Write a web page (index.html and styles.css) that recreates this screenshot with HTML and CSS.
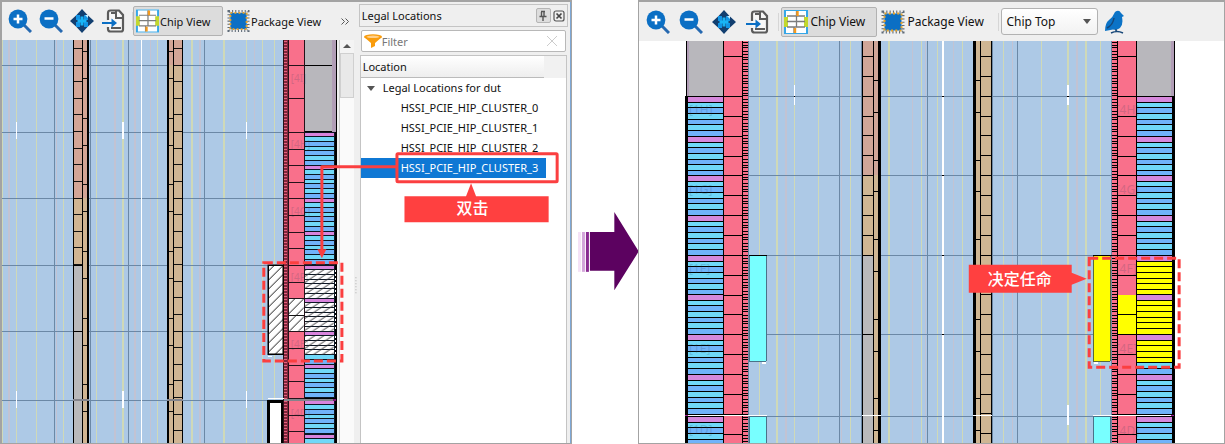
FILE: index.html
```html
<!DOCTYPE html>
<html lang="zh-CN">
<head>
<meta charset="utf-8">
<title>Legal Locations</title>
<link rel="stylesheet" href="styles.css">
</head>
<body>
<svg class="defs" aria-hidden="true">
  <defs>
    <symbol id="i-zoom-in" viewBox="0 0 24 24"><path d="M16 16l7 7" stroke="#2669b0" stroke-width="3"/><circle cx="10" cy="10" r="9.4" fill="#0b6fc4"/><path d="M10 5.5v9M5.5 10h9" stroke="#fff" stroke-width="2.5"/></symbol>
    <symbol id="i-zoom-out" viewBox="0 0 24 24"><path d="M16 16l7 7" stroke="#2669b0" stroke-width="3"/><circle cx="10" cy="10" r="9.4" fill="#0b6fc4"/><path d="M5.5 9.5h9" stroke="#fff" stroke-width="2.5"/></symbol>
    <symbol id="i-fit" viewBox="0 0 24 24"><path d="M6 6h5v5H6zM13 6h5v5h-5zM6 13h5v5H6zM13 13h5v5h-5z" fill="#1295e6"/><path d="M12 0l5.500 6h-3.500v5h4V6.500l6 5.500-6 5.500V13h-4v5h3.500L12 24l-5.500-6H10v-5H6v4.500L0 12l6-5.500V11h4V6H6.500z" fill="#123f70"/><path d="M10.500 7.500h3v9h-3zM7.500 10.500h9v3h-9z" fill="#19b4f5"/><path d="M15 6h3v3z" fill="#c9efff"/></symbol>
    <symbol id="i-goto" viewBox="0 0 24 24"><path d="M7 11V4q0-2.500 2.500-2.500H18L22 6v14.500q0 2-2 2H9.500q-2.500 0-2.500-2.500v-2" fill="#f7f7f7" stroke="#5b5b5b" stroke-width="2.200"/><path d="M15 2v7h7M10 4h5M10 19h10" fill="none" stroke="#5b5b5b" stroke-width="2"/><path d="M1 14h11" stroke="#0b6fc4" stroke-width="2"/><path d="M10.500 9.500l5.500 4.500-5.500 4.500z" fill="#0b6fc4"/></symbol>
    <symbol id="i-chip" viewBox="0 0 24 24"><path d="M0 0h24v24H0z" fill="#fff"/><path d="M1 0v24M23 0v24" stroke="#36a7e8" stroke-width="2"/><path d="M2 7v10M22 7v10" stroke="#c2d82e" stroke-width="4"/><path d="M2 .5h20M2 23.500h20" stroke="#36a7e8"/><path d="M3 6h18M3 11.500h18M3 17h18M12.500 6v11M12.500 1v5M10 17v6" stroke="#7c7c7c" stroke-width="1.300"/><path d="M13.500 1v5M11 18v5" stroke="#f59a1c" stroke-width="2.400"/></symbol>
    <symbol id="i-package" viewBox="0 0 24 24"><path d="M2 2h20v20H2z" fill="none" stroke="#5f6b78" stroke-width="3" stroke-dasharray="1.100 2.200"/><path d="M3.500 3.500h17v17h-17z" fill="#0b6fc4" stroke="#e9a327" stroke-width="2" stroke-dasharray="2 2.250"/></symbol>
    <symbol id="i-bird" viewBox="0 0 20 24"><path d="M11 2q4-3 6 1l3 3-2 1q1.500 8-2 11-3 2.500-7 1.500L1 21q0-8 4-11 4-3 6-8z" fill="#0b73c7"/><path d="M3 18Q9 15 10 8M7 23q6-3 12 0M12 19v3" stroke="#174778" stroke-width="1.500" fill="none"/></symbol>
    <symbol id="i-funnel" viewBox="0 0 18 15"><path d="M0 3l7 6v5l4-2V9l7-6z" fill="#f99c0c"/><ellipse cx="9" cy="2.800" rx="9" ry="2.600" fill="#f99c0c"/><ellipse cx="9" cy="2.800" rx="6.500" ry="1.300" fill="#ffd08b"/></symbol>

    <g id="mod-s"><path d="M0 0h30v34H0z" fill="#0b1622"/><path d="M0 1h29v3H0z" fill="#d884dc"/><path d="M0 5h29v4H0z" class="row-a"/><path d="M0 10h29v4H0z" class="row-b"/><path d="M0 15h29v3H0z" class="row-a"/><path d="M0 19h29v4H0z" class="row-b"/><path d="M0 24h29v4H0z" class="row-e"/><path d="M0 29h29v4H0z" class="row-f"/></g>
    <g id="mod-l"><path d="M0 0h35v41H0z" fill="#000"/><path d="M0 1h35v5H0z" fill="#d688dc"/><path d="M0 7h35v4H0z" class="row-a"/><path d="M0 12h35v5H0z" class="row-b"/><path d="M0 18h35v5H0z" class="row-a"/><path d="M0 24h35v4H0z" class="row-b"/><path d="M0 29h35v5H0z" class="row-e"/><path d="M0 35h35v5H0z" class="row-f"/></g>
    <pattern id="hatch" width="9" height="9" patternUnits="userSpaceOnUse"><path d="M-1 10L10-1M-1 1l2-2M8 10l2-2" stroke="#111" stroke-width="1"/></pattern>
    <pattern id="hatch-flat" width="9" height="6" patternUnits="userSpaceOnUse"><path d="M-1.500 7L10.500-1M-1.500 1L1.500-1M7.500 7l3-2" stroke="#333" stroke-width="1"/></pattern>
  </defs>
</svg>

<main class="page">
  <section class="window window-left" aria-label="Chip View">
    <div class="viewer">
      <div class="toolbar">
        <button class="tool" aria-label="Zoom in"><svg><use href="#i-zoom-in"/></svg></button>
        <button class="tool" aria-label="Zoom out"><svg><use href="#i-zoom-out"/></svg></button>
        <button class="tool" aria-label="Fit"><svg><use href="#i-fit"/></svg></button>
        <button class="tool" aria-label="Go to"><svg><use href="#i-goto"/></svg></button>
        <span class="sep"></span>
        <button class="view active"><svg><use href="#i-chip"/></svg>Chip View</button>
        <button class="view"><svg><use href="#i-package"/></svg>Package View</button>
        <button class="more" aria-label="More"><svg viewBox="0 0 8 7"><path d="M.5.5l3 3-3 3M4.500.5l3 3-3 3" fill="none" stroke="#555"/></svg></button>
      </div>
      <div class="stage">
        <svg class="canvas" viewBox="2 40 336 403" role="img" aria-label="Floorplan with legal location highlighted">
          <path d="M2 40h334v403H2z" fill="#adc9e6"/>
          <path class="ln-yellow" d="M2.500 40v403M16.500 40v403M36.500 40v403M64 40v403M96.500 40v403M157.500 40v403M246.500 40v403M262.500 40v403M274.500 40v403"/>
          <path class="ln-yellow wide" d="M123 40v403M192 40v403M224 40v403"/>
          <path class="ln-pink" d="M56.500 40v403M150.500 40v403M254.500 40v403"/>
          <path class="ln-pink wide" d="M9 40v403M115 40v403M135 40v403M200 40v403"/>
          <path class="ln-slate" d="M54.500 40v403M90.500 40v403M128.500 40v403M204.500 40v403M2 65.500h282M2 132.500h282M2 198.500h282M2 265.500h282M2 331.500h282M2 400.500h282"/>
          <path d="M141.500 40v403M16.500 122v17M246.500 122v17M16.500 391v17M246.500 391v17" stroke="#fff"/>
          <path d="M123 122v17M123 391v17" stroke="#fff" stroke-width="2"/>

          <path d="M73 40h16v403H73zM167 40h16v403h-16z" fill="#000"/>
          <path d="M74 40h8v158h-8zM83 40h4v158h-4zM169 40h4v25h-4zM174 40h8v25h-8z" fill="#d3a596"/>
          <path d="M74 198h8v67h-8zM83 198h4v245h-4zM169 65h4v378h-4zM174 65h8v378h-8z" fill="#d0b593"/>
          <path d="M74 266h8v65h-8zM74 332h8v111h-8z" fill="#b9b9bb"/>
          <path d="M78 48v218" stroke="#111" stroke-width="8" stroke-dasharray="1 15.640"/>
          <path d="M178 48v395" stroke="#111" stroke-width="8" stroke-dasharray="1 15.640"/>
          <path d="M85 51v392M171 51v392" stroke="#111" stroke-width="4" stroke-dasharray="1 26 1 38.700"/>
          <path d="M73 399h16v2H73zM167 399h16v2h-16z" fill="#84848c"/>

          <path d="M283 40h22v403h-22z" fill="#24131a"/>
          <path d="M284 40h4v403h-4z" fill="#81273c"/>
          <path d="M286 41v402" stroke="#e8627f" stroke-width="3" stroke-dasharray="1 2"/>
          <path d="M289 40h15v403h-15z" fill="#f9708b"/>
          <path d="M296.500 98v1M296.500 65v1M296.500 132v311" stroke="#24131a" stroke-width="15" stroke-dasharray="1 15.640"/>
          <path d="M305 40h32v403h-32z" fill="#000"/>
          <path d="M305 40h27v25h-27zM305 66h27v65h-27z" fill="#b8b7bc"/><path d="M332 40h4v92h-4z" fill="#b19db6"/>
          <use href="#mod-s" x="305" y="132"/><use href="#mod-s" x="305" y="165"/><use href="#mod-s" x="305" y="198"/><use href="#mod-s" x="305" y="231"/>
          <use class="blank" href="#mod-s" x="305" y="265"/><use class="blank" href="#mod-s" x="305" y="298"/><use class="blank partial" href="#mod-s" x="305" y="331"/><use href="#mod-s" x="305" y="364"/><use href="#mod-s" x="305" y="400"/><use href="#mod-s" x="305" y="434"/>
          <path d="M289 299h15v32h-15z" fill="#fff"/>
          <g class="smooth"><path d="M289 299h15v32h-15z" fill="url(#hatch)"/><path d="M305 270h29v28h-29zM305 303h29v28h-29zM305 336h29v19h-29z" fill="url(#hatch-flat)"/></g>
          <path d="M289 315.500h15" stroke="#111"/>
          <path d="M335.500 270v28M335.500 303v28M335.500 336v19" stroke="#fff" stroke-dasharray="2 2"/>
          <path d="M268 265h16v90h-16z" fill="#fff"/>
          <path class="smooth" d="M268.500 265.500h15v89h-15z" fill="url(#hatch)" stroke="#000" stroke-width="1.500"/>
          <path d="M268 356h4v1h-4zM268 398h16v1h-16z" fill="#fff"/>
          <path d="M267 400h16v43h-16z" fill="#000"/><path d="M270 403h11v40h-11z" fill="#fff"/>
          <path d="M284 399h50v2h-50z" fill="#84848c"/><path d="M333 399h3v2h-3z" fill="#7d1472"/>
          <g class="cell-label small"><text x="291" y="82">[4I]</text><text x="291" y="148">[4H]</text><text x="291" y="215">[4G]</text><text x="291" y="281">[4F]</text><text x="291" y="348">[4E]</text><text x="291" y="417">[4D]</text></g>
        </svg>
        <div class="scrollbar"><span class="scroll-up"></span><span class="thumb"></span></div>
      </div>
    </div>
    <aside class="panel">
      <header class="panel-title"><h2>Legal Locations</h2>
        <button class="pin" aria-label="Pin"><svg viewBox="0 0 12 12"><path d="M4 1.500h4M4.500 2v4M7 2v4M2.500 6.500h7M6 7v4" stroke="#555" stroke-width="1.400"/></svg></button>
        <button class="close" aria-label="Close"><svg viewBox="0 0 12 12"><rect x="1" y="1" width="10" height="10" rx="2" fill="none" stroke="#555" stroke-width="1.200"/><path d="M3.500 3.500l5 5M8.500 3.500l-5 5" stroke="#444" stroke-width="1.700"/></svg></button>
      </header>
      <label class="filter"><svg><use href="#i-funnel"/></svg><input type="text" placeholder="Filter" aria-label="Filter"><svg class="clear" viewBox="0 0 10 10"><path d="M0 0l10 10M10 0L0 10" stroke="#ccc"/></svg></label>
      <div class="tree">
        <div class="tree-head">Location</div>
        <p class="tree-root"><span class="caret"></span>Legal Locations for dut</p>
        <ul>
          <li>HSSI_PCIE_HIP_CLUSTER_0</li>
          <li>HSSI_PCIE_HIP_CLUSTER_1</li>
          <li>HSSI_PCIE_HIP_CLUSTER_2</li>
          <li class="selected">HSSI_PCIE_HIP_CLUSTER_3</li>
        </ul>
      </div>
    </aside>
    <svg class="notes" viewBox="0 0 571 443">
      <path d="M355.500 277v16" stroke="#aaa" stroke-dasharray="1 2"/>
      <path d="M397 166.500h-75.500V250" fill="none" stroke="#fb3f40" stroke-width="3" stroke-linejoin="round"/>
      <path d="M317 249h9l-4.500 9z" fill="#fb3f40"/>
      <rect class="dashes" x="263.500" y="262.500" width="78" height="98"/>
      <rect x="396.500" y="153.500" width="160" height="28" rx="1" fill="none" stroke="#fb3f40" stroke-width="3"/>
      <path d="M404 196h61.500l5-13 5 13H548v26H404z" fill="#ff4040"/>
      <text class="note-text" x="472" y="214">双击</text>
    </svg>
  </section>

  <div class="arrow"><svg viewBox="571 0 67 443" role="img" aria-label="Next step"><path d="M577 233h3v40h-3z" fill="#f5e2f6"/><path d="M581 233h3v40h-3z" fill="#d3a5da"/><path d="M585 233h3v40h-3z" fill="#892b91"/><path d="M589 233h24.500v-20L638 252.500l-24.500 39V272H589z" fill="#5c0260"/></svg></div>

  <section class="window window-right" aria-label="Chip View, placed">
    <div class="toolbar roomy">
      <button class="tool" aria-label="Zoom in"><svg><use href="#i-zoom-in"/></svg></button>
      <button class="tool" aria-label="Zoom out"><svg><use href="#i-zoom-out"/></svg></button>
      <button class="tool" aria-label="Fit"><svg><use href="#i-fit"/></svg></button>
      <button class="tool" aria-label="Go to"><svg><use href="#i-goto"/></svg></button>
      <span class="sep"></span>
      <button class="view active"><svg><use href="#i-chip"/></svg>Chip View</button>
      <button class="view"><svg><use href="#i-package"/></svg>Package View</button>
      <span class="sep"></span>
      <span class="picker"><select aria-label="Level"><option>Chip Top</option></select></span>
      <button class="tool bird" aria-label="Bird's eye view"><svg><use href="#i-bird"/></svg></button>
    </div>
    <svg class="canvas" viewBox="639 41 585 402" role="img" aria-label="Floorplan with assigned location">
      <path d="M639 41h585v402H639z" fill="#fff"/>
      <path d="M748 41h364v402H748z" fill="#adc9e6"/>
      <path class="ln-yellow" d="M759.500 41v402M794.500 41v402M818.500 41v402M850.500 41v402M921.500 41v402M937.500 41v402M962.500 41v402M1003.500 41v402M1041.500 41v402M1100.500 41v402"/>
      <path class="ln-yellow wide" d="M777 41v402M889 41v402M1068 41v402M1086 41v402"/>
      <path class="ln-pink" d="M841.500 41v402M912.500 41v402M925.500 41v402M953.500 41v402M1012.500 41v402"/>
      <path class="ln-pink wide" d="M786 41v402M1077 41v402"/>
      <path class="ln-slate" d="M748.500 41v402M839.500 41v402M861.500 41v402M927.500 41v402M992.500 41v402M1017.500 41v402M1111.500 41v402M748 96.500h364M748 175.500h364M748 255.500h364M748 334.500h364M748 416.500h364"/>
      <path d="M943 41v402M1068 85v20M1068 405v20" stroke="#fff" stroke-width="2"/><path d="M794.500 85v20" stroke="#fff"/>
      <path d="M794 96h1v1h-1zM942 96h2v1h-2zM942 175h2v1h-2zM942 255h2v1h-2zM942 334h2v1h-2zM1067 96h2v1h-2z"/>

      <path d="M862 41h19v402h-19zM973 41h19v402h-19z"/>
      <path d="M863 41h10v134h-10zM874 41h4v134h-4z" fill="#d0a698"/>
      <path d="M863 175h10v80h-10zM874 175h4v268h-4zM976 41h4v402h-4zM981 41h10v402h-10z" fill="#cfb693"/>
      <path d="M863 256h10v78h-10zM863 335h10v108h-10z" fill="#b9b9bb"/>
      <path d="M868 56v200M986 56v387" stroke="#000" stroke-width="10" stroke-dasharray="1 18.870"/>
      <path d="M876 80v363M978 80v363" stroke="#000" stroke-width="4" stroke-dasharray="1 31 1 46.600"/>
      <path d="M862 415h19v1h-19zM973 415h19v1h-19z" fill="#fff"/>

      <path d="M723 41h25v402h-25zM1112 41h25v402h-25z"/>
      <path d="M724 41h18v402h-18zM743 41h5v402h-5zM1112 41h5v402h-5zM1118 41h18v402h-18z" fill="#f9708b"/>
      <path d="M745.500 42v401M1114.500 42v401" stroke="#000" stroke-width="5" stroke-dasharray="1 2 1 1 1 3 1 2"/>
      <path d="M733 56v1M1127 56v1M733 96v347M1127 96v347" stroke="#000" stroke-width="18" stroke-dasharray="1 18.870"/>
      <path d="M685 41h38v402h-38zM1137 41h38v402h-38z"/>
      <path d="M685 41h1v55h-1zM1175 41h1v55h-1z" fill="#fff"/>
      <path d="M687 41h36v55h-36zM1137 41h37v55h-37z" fill="#b8b7bc"/><path d="M687 41h2v55h-2zM1171 41h3v55h-3z" fill="#b19db6"/>
      <use href="#mod-l" x="688" y="96"/><use href="#mod-l" x="688" y="136"/><use href="#mod-l" x="688" y="175"/><use href="#mod-l" x="688" y="215"/><use href="#mod-l" x="688" y="255"/><use href="#mod-l" x="688" y="294"/><use href="#mod-l" x="688" y="334"/><use href="#mod-l" x="688" y="374"/><use href="#mod-l" x="688" y="416"/>
      <use href="#mod-l" x="1137" y="96"/><use href="#mod-l" x="1137" y="136"/><use href="#mod-l" x="1137" y="175"/><use href="#mod-l" x="1137" y="215"/><use class="assigned" href="#mod-l" x="1137" y="255"/><use class="assigned" href="#mod-l" x="1137" y="294"/><use class="assigned partial" href="#mod-l" x="1137" y="334"/><use href="#mod-l" x="1137" y="374"/><use href="#mod-l" x="1137" y="416"/>
      <path d="M688 415h79v1h-79zM1093 415h79v1h-79z" fill="#fff"/><path d="M685 415h3v1h-3zM1171 415h3v1h-3z" fill="#9b1691"/>
      <path d="M1118 295h18v19h-18zM1118 315h18v19h-18z" fill="#ff0"/>
      <path d="M749.500 255.500h17v106h-17zM749.500 416.500h17v30h-17zM1093.500 416.500h17v30h-17z" fill="#78ffff" stroke="#4a7388"/>
      <path d="M1093.500 255.500h17v106h-17z" fill="#ff0" stroke="#59683a"/>
      <path d="M749 255h18v1h-18zM1093 255h19v1h-19z"/><path d="M762 362h4v2h-4zM1094 362h4v2h-4z" fill="#fff"/>
      <g class="cell-label"><text x="689" y="114">[1H]</text><text x="689" y="194">[1G]</text><text x="689" y="273">[1F]</text><text x="689" y="353">[1E]</text><text x="689" y="434">[1D]</text>
      <text x="1116" y="114">[4H]</text><text x="1116" y="194">[4G]</text><text x="1116" y="273">[4F]</text><text x="1116" y="353">[4E]</text><text x="1116" y="435">[4D]</text></g>
      <rect class="dashes smooth" x="1089.500" y="258.500" width="90" height="109"/>
      <path class="smooth" d="M969 265h103v8l15 6-15 6v8H969z" fill="#ff4040"/>
      <text class="note-text" x="1020" y="285">决定任命</text>
    </svg>
  </section>
</main>
</body>
</html>
```
FILE: styles.css
```css
* { box-sizing: border-box; }
body { margin: 0; background: #fff; color: #111; font-family: "Noto Sans", "Noto Sans CJK SC", sans-serif; font-size: 11px; }
.defs { position: absolute; width: 0; height: 0; }
button, input, select { font: inherit; color: inherit; }
button { display: flex; align-items: center; padding: 0; border: 0; background: none; }

.page { display: flex; align-items: flex-start; }
.window { position: relative; min-width: 0; border: 1px solid #a3a3a3; border-top-width: 2px; background: #efefef; }
.window-left { display: flex; flex: 571 1 0; border-left-width: 2px; }
.window-right { flex: 587 1 0; }
.arrow { flex: 67 1 0; min-width: 0; z-index: 1; }
.arrow svg { display: block; width: 100%; }

.viewer { flex: 1; min-width: 0; }
.toolbar { display: flex; align-items: center; height: 38px; padding: 0 6px; overflow: hidden; white-space: nowrap; }
.tool { flex: none; margin-right: 7px; }
.tool svg, .view svg { flex: none; width: 24px; height: 24px; }
.sep { flex: none; width: 1px; height: 18px; background: #d6d6d6; }
.view { flex: none; height: 30px; gap: 1px; padding: 0 2px; border: 1px solid transparent; }
.view.active { width: 90px; margin-right: 1px; border-color: #b2b2b2; border-radius: 2px; background: #dcdcdc; }
.view svg { width: 23px; }
.more { margin-left: auto; margin-right: 4px; }
.more svg { width: 8px; height: 7px; }

.toolbar.roomy { height: 39px; padding: 0 7px; font-size: 12px; }
.roomy .tool { margin-right: 9px; }
.roomy .sep { margin-right: 2px; }
.roomy .view.active { width: 96px; margin-right: 1px; }
.roomy .view svg { width: 24px; }
.roomy .view { gap: 2px; }
.roomy .view:not(.active) { width: 116px; margin-right: 4px; }
.picker { position: relative; flex: none; width: 97px; height: 27px; }
.picker::after { content: ""; position: absolute; right: 7px; top: 11px; border: 4px solid transparent; border-top: 5px solid #555; border-bottom: 0; }
.picker select { width: 100%; height: 100%; padding: 0 4px; border: 1px solid #b2b2b2; border-radius: 3px; background: linear-gradient(#fff, #f2f2f2); appearance: none; }
.roomy .bird { margin-left: 4px; }

.stage { display: flex; gap: 1px; }
.canvas { display: block; flex: 336 1 0; min-width: 0; width: 100%; shape-rendering: crispEdges; }
.scrollbar { flex: 14 1 0; margin-right: 5px; border-left: 1px solid #ccc; background: #fafafa; }
.scroll-up { display: flex; justify-content: center; height: 13px; padding-top: 4px; background: #f4f4f4; }
.scroll-up::before { content: ""; border: 4px solid transparent; border-bottom: 4px solid #555; border-top: 0; height: 0; }
.thumb { display: block; height: 45px; border: 1px solid #d0d0d0; background: #e9e9e9; }

.panel { display: flex; flex-direction: column; width: 212px; padding: 2px 2px 0 0; border-right: 1px solid #7da7d5; }
.panel-title { display: flex; align-items: center; height: 23px; padding: 0 2px; border: 1px solid #c4c4c4; }
.panel-title h2 { flex: 1; margin: 0; font-size: 11px; font-weight: 400; }
.pin { justify-content: center; width: 15px; height: 15px; margin-right: 2px; border: 1px solid #b5b5b5; border-radius: 2px; background: #ddd; }
.panel-title svg { width: 12px; height: 12px; }
.filter { display: flex; align-items: center; height: 22px; margin: 3px 2px; padding: 0 8px 0 2px; border: 1px solid #b8b8b8; border-radius: 2px; background: #fff; }
.filter svg { width: 18px; height: 15px; }
.filter .clear { width: 10px; height: 10px; }
.filter input { flex: 1; min-width: 0; padding: 0; border: 0; outline: 0; background: none; }
.filter input::placeholder { color: #777; }
.tree { flex: 1; margin: 0 1px; border: 1px solid #c4c4c4; border-bottom: 0; background: #fff; line-height: 20px; }
.tree-head { height: 22px; padding: 1px 2px; border-right: 22px solid #f1f1f1; box-shadow: inset 0 -1px #bbb; background: linear-gradient(#fff, #ededed); }
.tree-root { display: flex; align-items: center; gap: 8px; margin: 0; padding-left: 6px; }
.caret { border: 4px solid transparent; border-top: 5px solid #555; border-bottom: 0; }
.tree ul { margin: 0; padding: 0; list-style: none; }
.tree li { margin-right: 20px; padding-left: 40px; }
.tree li.selected { background: #0f78d4; color: #fff; }

.notes { position: absolute; top: -2px; left: -2px; width: calc(100% + 3px); pointer-events: none; }
.dashes { fill: none; stroke: #fb3f40; stroke-width: 3px; stroke-dasharray: 9 4; }
.note-text { fill: #fff; font-family: "Noto Sans CJK SC", sans-serif; font-size: 16px; font-weight: 500; text-anchor: middle; }
.smooth { shape-rendering: auto; }
.cell-label { font-size: 12px; fill: #24405c; opacity: .18; }
.cell-label.small { font-size: 10px; }

.ln-yellow { stroke: #cfd9b8; }
.ln-pink { stroke: #c2c3d3; }
.ln-slate { stroke: #6b88a6; }
.wide { stroke-width: 2px; }
.row-a { fill: var(--a, #70d8f8); }
.row-b { fill: var(--b, #70b3fa); }
.row-e { fill: var(--e, #70d8f8); }
.row-f { fill: var(--f, #70b3fa); }
.blank { --a: #fff; --b: #fff; --e: #fff; --f: #fff; }
.assigned { --a: #ff0; --b: #ff0; --e: #ff0; --f: #ff0; }
.partial { --e: #70d8f8; --f: #70b3fa; }
```
